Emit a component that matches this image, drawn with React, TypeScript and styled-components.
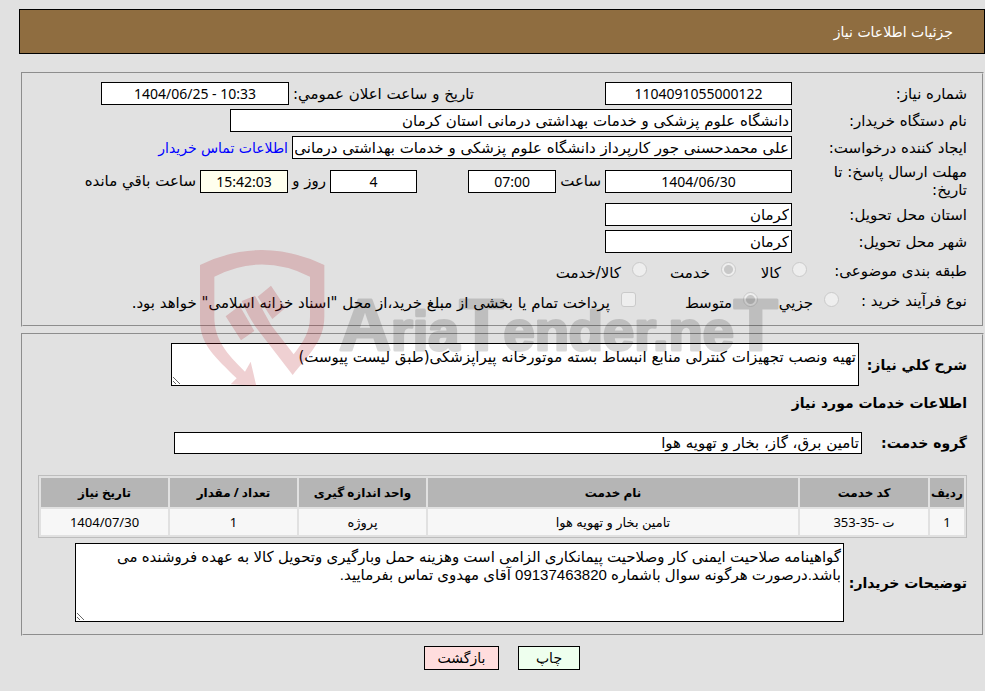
import React from "react";
import styled, { createGlobalStyle, css } from "styled-components";

const GlobalStyle = createGlobalStyle`
  * { box-sizing: border-box; }
  body {
    margin: 0;
    background: #e1e1e1;
    color: #000;
    font: 15px/18px "DejaVu Sans", sans-serif;
  }
  input, textarea, button { font: inherit; color: inherit; }
`;

const Page = styled.main`
  position: relative;
  padding: 9px 0 20px;
`;

const TitleBar = styled.header`
  display: flex;
  align-items: center;
  height: 45px;
  margin-left: 19px;
  margin-bottom: 18px;
  padding: 0 31px;
  border: 1px solid #000;
  background: #8f6d40;
  color: #fff;
`;

const Title = styled.h1`
  margin: 0;
  font-size: 14px;
  font-weight: normal;
`;

const Panel = styled.fieldset`
  display: flex;
  flex-direction: column;
  gap: 4px;
  min-width: 0;
  margin: 0 1px 6px 21px;
  padding: 8px 15px 12px;
  border: 2px groove #e1e1e1;
`;

const Row = styled.div<{ $height?: number }>`
  display: flex;
  align-items: center;
  gap: 4px;
  min-height: ${(p) => p.$height ?? 23}px;
`;

const Label = styled.label`
  flex: none;
  width: 171px;
  padding-left: 30px;
`;

const RadioCaption = styled.span<{ $width: number }>`
  flex: none;
  width: ${(p) => p.$width}px;
`;

const InlineLabel = styled.label`
  flex: none;
  white-space: nowrap;
`;

const Group = styled.div<{ $width: number }>`
  display: flex;
  align-items: center;
  gap: 4px;
  width: ${(p) => p.$width}px;
`;

const box = css`
  border: 1px solid #000;
  border-radius: 0;
  background: #fff;
  outline: none;
`;

const Field = styled.input<{ $width: number; $numeric?: boolean; $tint?: string }>`
  ${box}
  width: ${(p) => p.$width}px;
  min-width: 0;
  height: 23px;
  padding: 0 2px;
  ${(p) =>
    p.$numeric &&
    css`
      text-align: center;
      font-family: "Noto Sans", sans-serif;
      font-size: 14px;
      direction: ltr;
    `}
  ${(p) => p.$tint && css`background: ${p.$tint};`}
`;

const ContactLink = styled.a`
  color: #0000ff;
  font-size: 14px;
  text-decoration: none;
`;

const Option = styled.label<{ $width?: number }>`
  display: flex;
  align-items: center;
  gap: 11px;
  flex: none;
  width: ${(p) => (p.$width ? `${p.$width}px` : "auto")};
  white-space: nowrap;
`;

const OptionText = styled.span`
  padding-top: 4px;
`;

const Choice = styled.input`
  appearance: none;
  flex: none;
  width: 15px;
  height: 15px;
  margin: 0 0 3px;
  border: 1px solid #cacaca;
  border-radius: ${(p) => (p.type === "radio" ? "50%" : "3px")};
  background: #eeeeee;
  &:checked {
    background: radial-gradient(circle, #c8c8c8 4px, #eeeeee 5px);
  }
`;

const StrongLabel = styled.label<{ $width?: number }>`
  flex: none;
  width: ${(p) => (p.$width ? `${p.$width}px` : "auto")};
  font-weight: bold;
  font-size: 14px;
`;

const Heading = styled.h2`
  margin: 4px 0 15px;
  font-size: 14px;
  line-height: 18px;
`;

const Area = styled.textarea<{ $height: number; $end: number; $digits?: boolean }>`
  ${box}
  flex: 1;
  min-width: 0;
  height: ${(p) => p.$height}px;
  margin-inline-end: ${(p) => p.$end}px;
  padding: 4px 2px;
  font-family: ${(p) => (p.$digits ? '"Liberation Sans", ' : "")}"DejaVu Sans", sans-serif;
  line-height: 18px;
  overflow: hidden;
`;

const WideField = styled(Field)`
  flex: 1;
  height: 22px;
  margin-inline-end: 136px;
`;

const Services = styled.table`
  width: 100%;
  margin: 17px 0 1px;
  border: 1px solid #bdbdbd;
  border-spacing: 2px;
  table-layout: fixed;
  font-family: "Noto Sans", "DejaVu Sans", sans-serif;
  font-size: 13px;
  text-align: center;
`;

const HeadCell = styled.th<{ $width?: string }>`
  width: ${(p) => p.$width ?? "auto"};
  height: 29px;
  padding: 0;
  background: #b5b5b5;
  font-size: 12px;
  white-space: nowrap;
`;

const Cell = styled.td`
  height: 26px;
  padding: 0;
  background: #f7f7f7;
`;

const Actions = styled.div`
  display: flex;
  justify-content: center;
  gap: 19px;
  margin-top: 10px;
  padding-left: 19px;
`;

const ActionButton = styled.button<{ $tint: string; $width: number }>`
  width: ${(p) => p.$width}px;
  height: 24px;
  padding: 0;
  border: 1px solid #000;
  background: ${(p) => p.$tint};
  font-size: 14px;
`;

const Watermark = styled.svg`
  position: absolute;
  top: 249px;
  right: 0;
  left: 0;
  margin: 0 auto;
  pointer-events: none;
  direction: ltr;
`;

const Mark = styled.text`
  fill: #000;
  stroke: #000;
  stroke-width: 3px;
  stroke-linejoin: round;
  opacity: 0.15;
  font: bold 56px "Liberation Sans", sans-serif;
`;

const BigLetter = styled.tspan`
  font-size: 72px;
`;

function Brand() {
  return (
    <Watermark width="585" height="140" viewBox="0 0 585 140" aria-hidden="true">
      <g transform="translate(-5 -4) scale(0.3333)" fill="rgb(175,20,30)" fillOpacity="0.2">
        <path d="M15 60Q200 -30 388 60V215C388 285 345 325 293 390L185 250Q160 215 140 168L180 152L228 240L296 328C325 290 345 260 345 215V95Q200 22 58 95V215C58 285 95 325 150 380L167 350L184 423L107 418L125 400C60 335 15 300 15 225Z" />
        <path d="M92 214L134 182L178 258L138 286ZM188 155L228 122L272 188L232 222Z" />
      </g>
      <Mark x="139" y="101">
        <BigLetter>A</BigLetter>ria<BigLetter>T</BigLetter>ender.ne<BigLetter>T</BigLetter>
      </Mark>
    </Watermark>
  );
}

const columns = [
  { title: "ردیف", value: "1", width: "34px" },
  { title: "کد خدمت", value: "ت -35-353", width: "128px" },
  { title: "نام خدمت", value: "تامین بخار و تهویه هوا" },
  { title: "واحد اندازه گیری", value: "پروژه", width: "127px" },
  { title: "تعداد / مقدار", value: "1", width: "127px" },
  { title: "تاریخ نیاز", value: "1404/07/30", width: "127px" },
];

export default function App() {
  return (
    <Page dir="rtl" lang="fa">
      <GlobalStyle />
      <TitleBar>
        <Title>جزئیات اطلاعات نیاز</Title>
      </TitleBar>

      <Panel>
        <Row>
          <Label htmlFor="number">شماره نیاز:</Label>
          <Group $width={314}>
            <Field id="number" $width={187} $numeric readOnly defaultValue="1104091055000122" />
          </Group>
          <InlineLabel htmlFor="announced">تاریخ و ساعت اعلان عمومي:</InlineLabel>
          <Field id="announced" $width={188} $numeric readOnly defaultValue="1404/06/25 - 10:33" />
        </Row>
        <Row>
          <Label htmlFor="buyer">نام دستگاه خریدار:</Label>
          <Field id="buyer" $width={562} readOnly defaultValue="دانشگاه علوم پزشکی و خدمات بهداشتی درمانی استان کرمان" />
        </Row>
        <Row>
          <Label htmlFor="creator">ایجاد کننده درخواست:</Label>
          <Field
            id="creator"
            $width={500}
            readOnly
            defaultValue="علی محمدحسنی جور کارپرداز دانشگاه علوم پزشکی و خدمات بهداشتی درمانی استان کرمان"
          />
          <ContactLink href="#contact">اطلاعات تماس خریدار</ContactLink>
        </Row>
        <Row $height={36}>
          <Label htmlFor="deadline">
            مهلت ارسال پاسخ: تا تاریخ:
          </Label>
          <Group $width={371}>
            <Field id="deadline" $width={187} $numeric readOnly defaultValue="1404/06/30" />
            <InlineLabel htmlFor="hour">ساعت</InlineLabel>
            <Field id="hour" $width={88} $numeric readOnly defaultValue="07:00" />
          </Group>
          <Group $width={125}>
            <Field id="days" $width={87} $numeric readOnly defaultValue="4" />
            <InlineLabel htmlFor="days">روز و</InlineLabel>
          </Group>
          <Field id="left" $width={88} $numeric $tint="#ffffee" readOnly defaultValue="15:42:03" />
          <InlineLabel htmlFor="left">ساعت باقي مانده</InlineLabel>
        </Row>
        <Row>
          <Label htmlFor="province">استان محل تحویل:</Label>
          <Field id="province" $width={187} readOnly defaultValue="کرمان" />
        </Row>
        <Row>
          <Label htmlFor="city">شهر محل تحویل:</Label>
          <Field id="city" $width={187} readOnly defaultValue="کرمان" />
        </Row>
        <Row $height={28} role="radiogroup" aria-labelledby="subject">
          <RadioCaption id="subject" $width={156}>طبقه بندی موضوعی:</RadioCaption>
          <Option $width={67}>
            <Choice type="radio" name="subject" disabled />
            <OptionText>کالا</OptionText>
          </Option>
          <Option $width={85}>
            <Choice type="radio" name="subject" disabled defaultChecked />
            <OptionText>خدمت</OptionText>
          </Option>
          <Option>
            <Choice type="radio" name="subject" disabled />
            <OptionText>کالا/خدمت</OptionText>
          </Option>
        </Row>
        <Row $height={24} role="radiogroup" aria-labelledby="process">
          <RadioCaption id="process" $width={124}>نوع فرآیند خرید :</RadioCaption>
          <Option $width={77}>
            <Choice type="radio" name="process" disabled />
            <OptionText>جزیي</OptionText>
          </Option>
          <Option $width={118}>
            <Choice type="radio" name="process" disabled defaultChecked />
            <OptionText>متوسط</OptionText>
          </Option>
          <Option>
            <Choice type="checkbox" disabled />
            <OptionText>پرداخت تمام یا بخشی از مبلغ خرید،از محل "اسناد خزانه اسلامی" خواهد بود.</OptionText>
          </Option>
        </Row>
      </Panel>

      <Panel>
        <Row>
          <StrongLabel htmlFor="summary" $width={104}>شرح کلي نیاز:</StrongLabel>
          <Area
            id="summary"
            $height={43}
            $end={133}
            readOnly
            defaultValue="تهیه ونصب تجهیزات کنترلی منابع انبساط بسته موتورخانه پیراپزشکی(طبق لیست پیوست)"
          />
        </Row>
        <Heading>اطلاعات خدمات مورد نیاز</Heading>
        <Row>
          <StrongLabel htmlFor="group" $width={101}>گروه خدمت:</StrongLabel>
          <WideField id="group" $width={688} readOnly defaultValue="تامین برق، گاز، بخار و تهویه هوا" />
        </Row>
        <Services>
          <thead>
            <tr>
              {columns.map((c) => (
                <HeadCell key={c.title} $width={c.width} scope="col">{c.title}</HeadCell>
              ))}
            </tr>
          </thead>
          <tbody>
            <tr>
              {columns.map((c) => (
                <Cell key={c.title}>{c.value}</Cell>
              ))}
            </tr>
          </tbody>
        </Services>
        <Row>
          <StrongLabel htmlFor="notes" $width={119}>توضیحات خریدار:</StrongLabel>
          <Area
            id="notes"
            $height={79}
            $end={37}
            $digits
            readOnly
            defaultValue={
              "گواهینامه صلاحیت ایمنی کار وصلاحیت پیمانکاری الزامی است وهزینه حمل وبارگیری وتحویل کالا به عهده فروشنده می\nباشد.درصورت هرگونه سوال باشماره 09137463820 آقای مهدوی تماس بفرمایید."
            }
          />
        </Row>
      </Panel>

      <Actions>
        <ActionButton type="button" $tint="#eeffee" $width={62}>چاپ</ActionButton>
        <ActionButton type="button" $tint="#ffdddd" $width={75}>بازگشت</ActionButton>
      </Actions>
      <Brand />
    </Page>
  );
}
